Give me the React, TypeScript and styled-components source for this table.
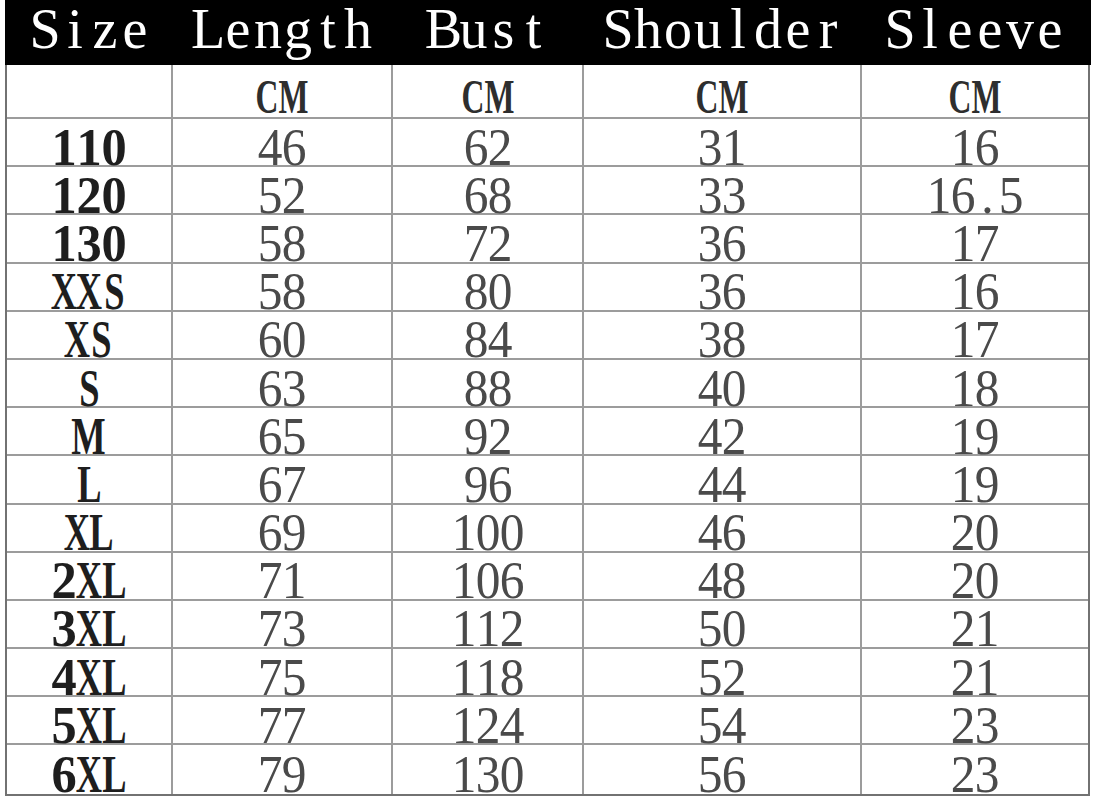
import React from "react";
import styled, { createGlobalStyle } from "styled-components";

const COLS = "166px 220px 191px 278px 226px";

const GlobalStyle = createGlobalStyle`
  html, body { margin: 0; padding: 0; background: #fff; }
  body { font-family: "Liberation Serif", "Times New Roman", serif; }
`;

const Page = styled.main`
  width: 1093px;
  height: 800px;
  padding-left: 5px;
  box-sizing: border-box;
  overflow: hidden;
  background: #fff;
`;

const HeaderBar = styled.header`
  display: grid;
  grid-template-columns: ${COLS};
  grid-template-rows: minmax(0, 1fr);
  width: 1086px;
  height: 65px;
  padding-left: 2px;
  box-sizing: border-box;
  background: #000;
  color: #fff;
`;

const HeadCell = styled.div`
  display: flex;
  align-items: center;
  justify-content: center;
  min-height: 0;
  padding-bottom: 7px;
  box-sizing: border-box;
  font-size: 56px;
  line-height: 1;
  font-weight: 400;
`;

const Chart = styled.section`
  width: 1085px;
  box-sizing: border-box;
  border: 2px solid #727272;
  border-top: none;
`;

const Row = styled.div<{ $h: number }>`
  display: grid;
  grid-template-columns: ${COLS};
  grid-template-rows: minmax(0, 1fr);
  height: ${(p) => p.$h}px;
  box-sizing: border-box;
  border-bottom: 2px solid #9c9c9c;
  &:last-child { border-bottom: none; }
`;

const Cell = styled.div<{ $kind: "unit" | "label" | "value" }>`
  display: flex;
  align-items: center;
  justify-content: center;
  min-height: 0;
  box-sizing: border-box;
  border-right: 2px solid #9c9c9c;
  &:last-child { border-right: none; }
  line-height: 1;
  padding-top: ${(p) => (p.$kind === "unit" ? 12 : 11)}px;
  font-size: ${(p) => (p.$kind === "unit" ? 48 : 52)}px;
  font-weight: ${(p) => (p.$kind === "value" ? 400 : 700)};
  color: ${(p) => (p.$kind === "value" ? "#4a4a4a" : p.$kind === "unit" ? "#2e2e2e" : "#1e1e1e")};
`;

const Unit = styled.span`
  display: inline-block;
  transform: scaleX(0.66);
`;

const Word = styled.span`
  display: inline-flex;
  white-space: pre;
`;

const Glyph = styled.span<{ $w: number }>`
  display: inline-flex;
  justify-content: center;
  width: ${(p) => p.$w}px;
`;

const Ink = styled.span<{ $sx: number }>`
  display: inline-block;
  transform: scaleX(${(p) => p.$sx});
`;

const Mono: React.FC<{ text: string; w: number; sx?: (c: string) => number }> = ({
  text,
  w,
  sx = () => 1,
}) => (
  <Word>
    {Array.from(text).map((c, i) => (
      <Glyph key={i} $w={w}>
        <Ink $sx={sx(c)}>{c === " " ? "\u00a0" : c}</Ink>
      </Glyph>
    ))}
  </Word>
);

const headers = ["Size", "Length", "Bust", "Shoulder", "Sleeve"];

const rows: [string, string, string, string, string][] = [
  ["110", "46", "62", "31", "16"],
  ["120", "52", "68", "33", "16.5"],
  ["130", "58", "72", "36", "17"],
  ["XXS", "58", "80", "36", "16"],
  ["XS", "60", "84", "38", "17"],
  ["S", "63", "88", "40", "18"],
  ["M", "65", "92", "42", "19"],
  ["L", "67", "96", "44", "19"],
  ["XL", "69", "100", "46", "20"],
  ["2XL", "71", "106", "48", "20"],
  ["3XL", "73", "112", "50", "21"],
  ["4XL", "75", "118", "52", "21"],
  ["5XL", "77", "124", "54", "23"],
  ["6XL", "79", "130", "56", "23"],
];

const labelScale = (c: string) => (/[0-9]/.test(c) ? 0.97 : 0.7);

export default function App() {
  return (
    <>
      <GlobalStyle />
      <Page>
        <HeaderBar>
          {headers.map((h) => (
            <HeadCell key={h}>
              <Mono text={h} w={30} />
            </HeadCell>
          ))}
        </HeaderBar>
        <Chart>
          <Row $h={54}>
            <Cell $kind="unit" />
            {[0, 1, 2, 3].map((i) => (
              <Cell key={i} $kind="unit">
                <Unit>CM</Unit>
              </Cell>
            ))}
          </Row>
          {rows.map((r) => (
            <Row key={r[0]} $h={48.2}>
              <Cell $kind="label">
                <Mono text={r[0]} w={25} sx={labelScale} />
              </Cell>
              {r.slice(1).map((v, i) => (
                <Cell key={i} $kind="value">
                  <Mono text={v} w={24} sx={() => 0.95} />
                </Cell>
              ))}
            </Row>
          ))}
        </Chart>
      </Page>
    </>
  );
}
